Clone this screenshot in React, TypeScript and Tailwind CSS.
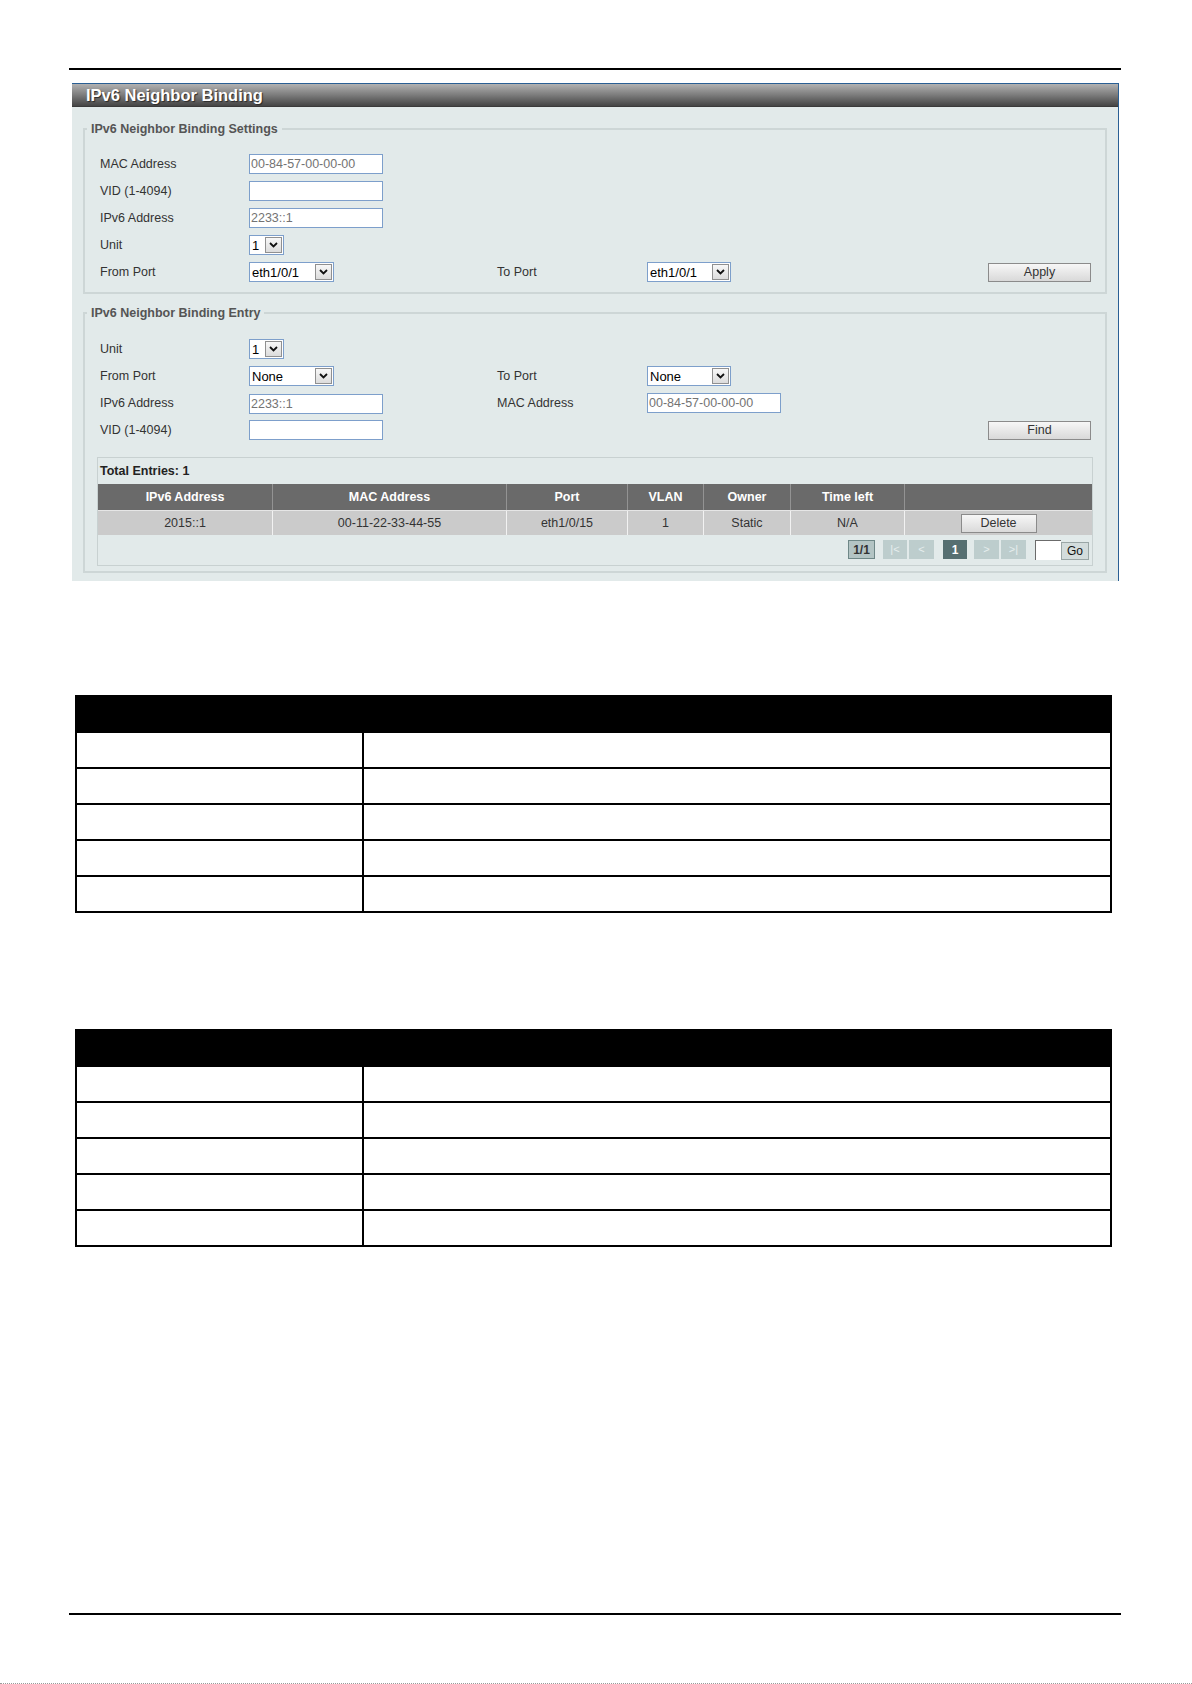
import React from 'react';

const font = "font-['Liberation_Sans',Arial,sans-serif]";

function Chevron() {
  return (
    <svg width="9" height="6" viewBox="0 0 9 6" fill="none">
      <path d="M1 1l3.5 3.5L8 1" stroke="#111" strokeWidth="1.8" />
    </svg>
  );
}

function Select({ value, width }: { value: string; width: string }) {
  return (
    <div className={`${width} h-[20px] flex items-center justify-between bg-white border border-[#7d9fcb] pl-[2px] pr-[1px]`}>
      <span className="text-[13px] text-black leading-none">{value}</span>
      <span className="w-[17px] h-[16px] flex items-center justify-center border border-[#909090] bg-linear-to-b from-[#f8f8f8] to-[#dcdcdc]">
        <Chevron />
      </span>
    </div>
  );
}

function TextBox({ value = '', width = 'w-[134px]' }: { value?: string; width?: string }) {
  return (
    <input
      readOnly
      value={value}
      className={`${width} h-[20px] px-[1px] bg-white border border-[#7d9fcb] text-[12.5px] text-[#737373] outline-none`}
    />
  );
}

function Btn({ label }: { label: string }) {
  return (
    <button className="w-[103px] h-[19px] border border-[#8b8b8b] bg-linear-to-b from-[#f7f7f7] to-[#d9d9d9] text-[12.5px] text-[#333] leading-none">
      {label}
    </button>
  );
}

function Label({ text, width = 'w-[149px]' }: { text: string; width?: string }) {
  return <span className={`${width} shrink-0 text-[12.5px] text-[#333] leading-none`}>{text}</span>;
}

function Row({ children }: { children: React.ReactNode }) {
  return <div className="flex items-center h-[20px]">{children}</div>;
}

function Fieldset({ legend, className, children }: { legend: string; className: string; children: React.ReactNode }) {
  return (
    <fieldset className={`mx-[11px] border-2 border-[#cdd6d6] ${className}`}>
      <legend className="ml-[2px] px-[4px] text-[12.5px] leading-[16px] font-bold text-[#555]">{legend}</legend>
      {children}
    </fieldset>
  );
}

const columns = ['IPv6 Address', 'MAC Address', 'Port', 'VLAN', 'Owner', 'Time left', ''];
const entry = ['2015::1', '00-11-22-33-44-55', 'eth1/0/15', '1', 'Static', 'N/A'];

function EntryTable() {
  return (
    <div className="ml-[12px] mr-[12px] border border-[#c8d1d1]">
      <div className="h-[26px] pl-[2px] flex items-center text-[12.5px] font-bold text-[#222]">Total Entries: 1</div>
      <div className="grid grid-cols-[174px_234px_121px_76px_87px_114px_188px] h-[26px] bg-[#6a6a6a]">
        {columns.map((c, i) => (
          <div
            key={i}
            className={`flex items-center justify-center text-[12.5px] font-bold text-white ${i > 0 ? 'border-l border-[#939393]' : ''}`}
          >
            {c}
          </div>
        ))}
      </div>
      <div className="grid grid-cols-[174px_234px_121px_76px_87px_114px_188px] h-[25px] bg-[#cbcbcb] border-t border-[#e6e6e6]">
        {entry.map((c, i) => (
          <div
            key={i}
            className={`flex items-center justify-center text-[12.5px] text-[#333] ${i > 0 ? 'border-l border-[#f2f2f2]' : ''}`}
          >
            {c}
          </div>
        ))}
        <div className="flex items-center justify-center border-l border-[#f2f2f2]">
          <button className="w-[76px] h-[19px] border border-[#8b8b8b] bg-linear-to-b from-[#f7f7f7] to-[#dadada] text-[12.5px] text-[#333] leading-none">
            Delete
          </button>
        </div>
      </div>
      {/* pager */}
      <div className="flex items-center justify-end pr-[3px] pt-[5px] pb-[6px] h-[30px]">
        <span className="w-[27px] h-[19px] flex items-center justify-center bg-[#b3c4c4] border border-[#6e8787] text-[12px] font-bold text-[#333]">1/1</span>
        <span className="ml-[8px] w-[24px] h-[19px] flex items-center justify-center bg-[#bdcdcd] text-[11px] text-[#e6eeee]">|&lt;</span>
        <span className="ml-[2px] w-[25px] h-[19px] flex items-center justify-center bg-[#bdcdcd] text-[11px] text-[#e6eeee]">&lt;</span>
        <span className="ml-[9px] w-[24px] h-[19px] flex items-center justify-center bg-[#566f71] text-[12px] font-bold text-white">1</span>
        <span className="ml-[7px] w-[25px] h-[19px] flex items-center justify-center bg-[#bdcdcd] text-[11px] text-[#e6eeee]">&gt;</span>
        <span className="ml-[2px] w-[25px] h-[19px] flex items-center justify-center bg-[#bdcdcd] text-[11px] text-[#e6eeee]">&gt;|</span>
        <span className="ml-[9px] w-[26px] h-[20px] bg-white border-t border-l border-[#6b6b6b] border-b-[#dcdcdc] border-r-[#dcdcdc]" />
        <span className="w-[28px] h-[18px] mt-[3px] flex items-end justify-center bg-[#d3dcdc] border border-[#9aa6a6] text-[12px] text-[#111] leading-[15px]">Go</span>
      </div>
    </div>
  );
}

function DescTable({ className }: { className: string }) {
  return (
    <div className={`ml-[75px] w-[1037px] border-2 border-black ${className}`}>
      <div className="h-[34px] bg-black" />
      {[0, 1, 2, 3, 4].map((i) => (
        <div key={i} className="grid grid-cols-[287px_1fr] h-[36px] border-t-2 border-black">
          <div className="border-r-2 border-black" />
          <div />
        </div>
      ))}
    </div>
  );
}

export default function App() {
  return (
    <div className={`w-[1192px] h-[1684px] bg-white flex flex-col pt-[68px] ${font}`}>
      <div className="ml-[69px] w-[1052px] h-[2px] bg-black shrink-0" />

      <section className="mt-[13px] ml-[72px] w-[1047px] bg-[#e2eaea] border-t border-r border-[#2a5f94] shrink-0">
        <div className="h-[23px] flex items-center pl-[14px] bg-linear-to-b from-[#b2b2b2] via-[#7c7c7c] to-[#454545] border-b border-[#3a3a3a]">
          <h1 className="text-[16.5px] font-bold text-white leading-none [text-shadow:1px_1px_1px_#2a2a2a]">IPv6 Neighbor Binding</h1>
        </div>

        <Fieldset legend="IPv6 Neighbor Binding Settings" className="mt-[14px] pt-[17px] pb-[10px]">
          <div className="flex flex-col gap-[7px] pl-[15px] pr-[14px]">
            <Row>
              <Label text="MAC Address" />
              <TextBox value="00-84-57-00-00-00" />
            </Row>
            <Row>
              <Label text="VID (1-4094)" />
              <TextBox />
            </Row>
            <Row>
              <Label text="IPv6 Address" />
              <TextBox value="2233::1" />
            </Row>
            <Row>
              <Label text="Unit" />
              <Select value="1" width="w-[35px]" />
            </Row>
            <Row>
              <Label text="From Port" />
              <div className="w-[248px] shrink-0">
                <Select value="eth1/0/1" width="w-[85px]" />
              </div>
              <Label text="To Port" width="w-[150px]" />
              <Select value="eth1/0/1" width="w-[84px]" />
              <div className="flex-1" />
              <Btn label="Apply" />
            </Row>
          </div>
        </Fieldset>

        <Fieldset legend="IPv6 Neighbor Binding Entry" className="mt-[11px] mb-[8px] pt-[18px] pb-[5px]">
          <div className="flex flex-col gap-[7px] pl-[15px] pr-[14px]">
            <Row>
              <Label text="Unit" />
              <Select value="1" width="w-[35px]" />
            </Row>
            <Row>
              <Label text="From Port" />
              <div className="w-[248px] shrink-0">
                <Select value="None" width="w-[85px]" />
              </div>
              <Label text="To Port" width="w-[150px]" />
              <Select value="None" width="w-[84px]" />
            </Row>
            <Row>
              <Label text="IPv6 Address" />
              <div className="w-[248px] shrink-0">
                <TextBox value="2233::1" />
              </div>
              <Label text="MAC Address" width="w-[150px]" />
              <TextBox value="00-84-57-00-00-00" />
            </Row>
            <Row>
              <Label text="VID (1-4094)" />
              <TextBox />
              <div className="flex-1" />
              <Btn label="Find" />
            </Row>
          </div>
          <div className="mt-[17px]">
            <EntryTable />
          </div>
        </Fieldset>
      </section>

      <DescTable className="mt-[114px] shrink-0" />
      <DescTable className="mt-[116px] shrink-0" />

      <div className="mt-auto ml-[69px] w-[1052px] h-[2px] bg-black shrink-0" />
      <div className="h-[68px] shrink-0" />
      <div className="h-[1px] border-b border-dotted border-[#9a9a9a] shrink-0" />
    </div>
  );
}
